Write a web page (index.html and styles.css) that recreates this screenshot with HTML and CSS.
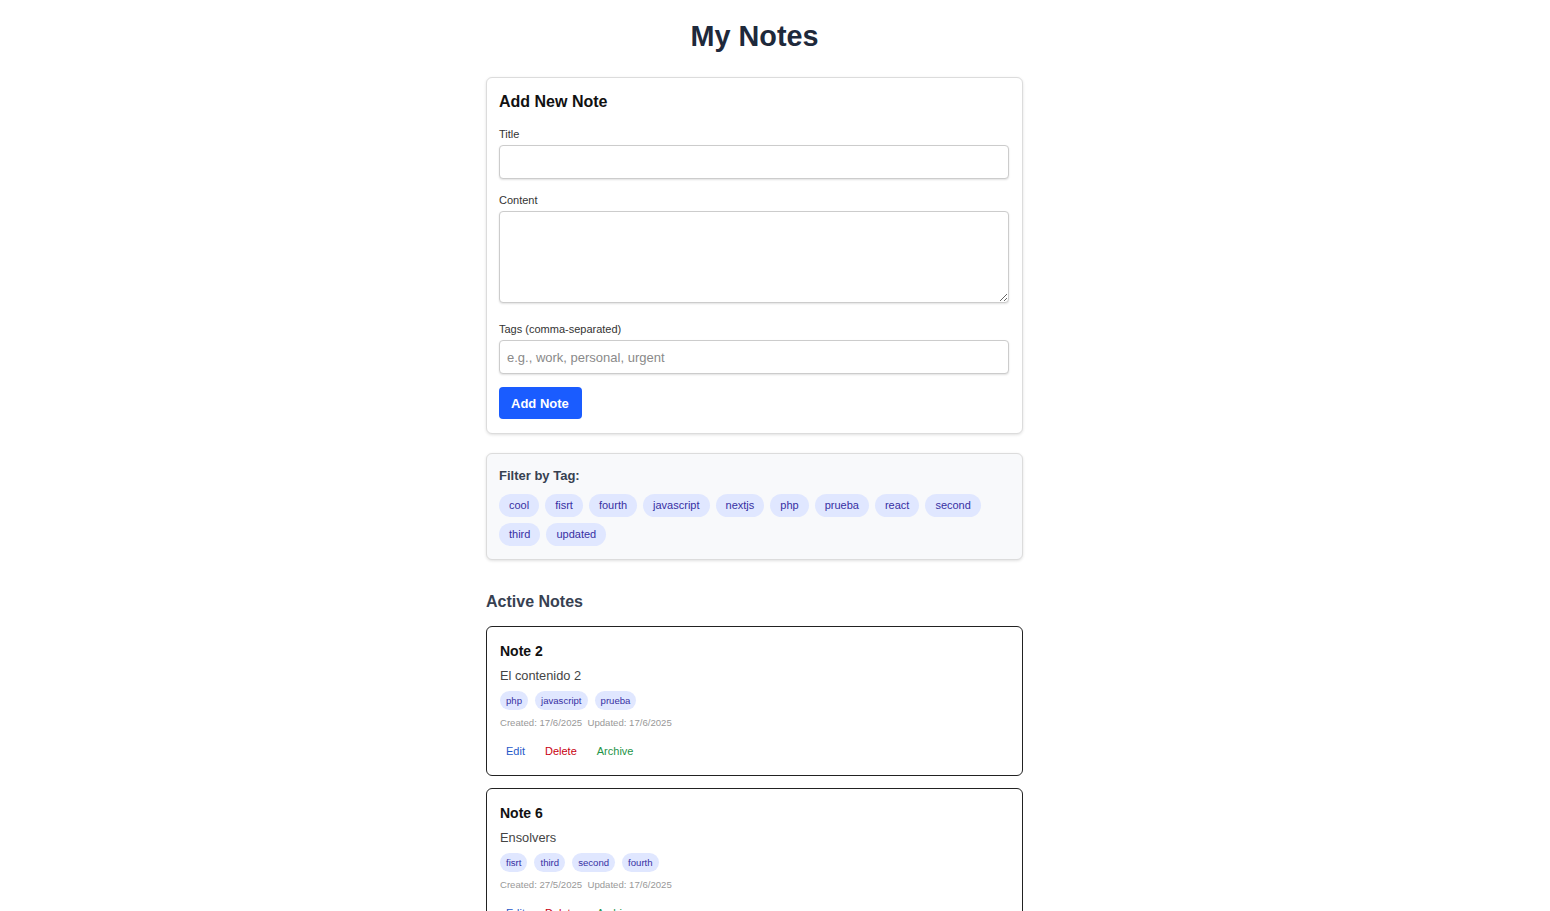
FILE: index.html
```html
<!DOCTYPE html>
<html lang="en">
<head>
<meta charset="utf-8">
<title>My Notes</title>
<link rel="stylesheet" href="styles.css">
</head>
<body>
<div class="app">
  <h1 class="page-title">My Notes</h1>

  <form class="card form-card">
    <h2 class="card-title">Add New Note</h2>
    <div class="field">
      <label class="label">Title</label>
      <input class="input" type="text">
    </div>
    <div class="field field-area">
      <label class="label">Content</label>
      <textarea class="input textarea"></textarea>
    </div>
    <div class="field field-last">
      <label class="label">Tags (comma-separated)</label>
      <input class="input" type="text" placeholder="e.g., work, personal, urgent">
    </div>
    <button type="button" class="btn-primary">Add Note</button>
  </form>

  <section class="card filter-card">
    <h3 class="filter-title">Filter by Tag:</h3>
    <div class="tag-list">
      <span class="tag">cool</span>
      <span class="tag">fisrt</span>
      <span class="tag">fourth</span>
      <span class="tag">javascript</span>
      <span class="tag">nextjs</span>
      <span class="tag">php</span>
      <span class="tag">prueba</span>
      <span class="tag">react</span>
      <span class="tag">second</span>
      <span class="tag">third</span>
      <span class="tag">updated</span>
    </div>
  </section>

  <h2 class="section-title">Active Notes</h2>

  <article class="note">
    <h3 class="note-title">Note 2</h3>
    <p class="note-content">El contenido 2</p>
    <div class="note-tags">
      <span class="chip">php</span>
      <span class="chip">javascript</span>
      <span class="chip">prueba</span>
    </div>
    <div class="meta">Created: 17/6/2025&nbsp;&nbsp;Updated: 17/6/2025</div>
    <div class="actions">
      <button class="act edit">Edit</button>
      <button class="act delete">Delete</button>
      <button class="act archive">Archive</button>
    </div>
  </article>

  <article class="note">
    <h3 class="note-title">Note 6</h3>
    <p class="note-content">Ensolvers</p>
    <div class="note-tags">
      <span class="chip">fisrt</span>
      <span class="chip">third</span>
      <span class="chip">second</span>
      <span class="chip">fourth</span>
    </div>
    <div class="meta">Created: 27/5/2025&nbsp;&nbsp;Updated: 17/6/2025</div>
    <div class="actions">
      <button class="act edit">Edit</button>
      <button class="act delete">Delete</button>
      <button class="act archive">Archive</button>
    </div>
  </article>
</div>
</body>
</html>
```

FILE: styles.css
```css
* { box-sizing: border-box; }

body {
  margin: 0;
  padding-right: 41px;
  background: #fff;
  font-family: "Liberation Sans", Arial, sans-serif;
  color: #222;
}

.app {
  width: 537px;
  margin: 0 auto;
  padding-bottom: 40px;
}

.page-title {
  margin: 0;
  padding: 19px 0 24px;
  text-align: center;
  font-size: 28.8px;
  line-height: 34px;
  font-weight: 700;
  color: #1e293b;
}

.card {
  border: 1px solid #dcdcdc;
  border-radius: 6px;
  box-shadow: 0 1px 3px rgba(0,0,0,0.12);
  background: #fff;
}

.form-card {
  padding: 13px 13px 14px 12px;
  margin-bottom: 19px;
}

.card-title {
  margin: 0 0 15px;
  font-size: 16px;
  line-height: 22px;
  font-weight: 700;
  color: #111;
}

.field { margin-bottom: 15px; }
.field-area { margin-bottom: 20px; }
.field-last { margin-bottom: 13px; }

.label {
  display: block;
  font-size: 11px;
  line-height: 13px;
  color: #333;
  margin-bottom: 4px;
}

.input {
  display: block;
  width: 100%;
  height: 34px;
  padding: 6px 7px;
  border: 1px solid #ccc;
  border-radius: 4px;
  box-shadow: 0 1px 2px rgba(0,0,0,0.12);
  font-family: "Liberation Sans", Arial, sans-serif;
  font-size: 13px;
  color: #222;
  background: #fff;
}
.input::placeholder { color: #8a8a8a; }

.textarea {
  height: 92px;
  resize: vertical;
}

.btn-primary {
  display: block;
  height: 32px;
  padding: 0 13px 0 12px;
  border: none;
  border-radius: 4px;
  background: #1a5cff;
  color: #fff;
  font-family: "Liberation Sans", Arial, sans-serif;
  font-size: 13px;
  font-weight: 700;
}

.filter-card {
  background: #f8f9fb;
  padding: 14px 12px 13px 12px;
  margin-bottom: 32px;
}

.filter-title {
  margin: 0 0 10px;
  font-size: 13px;
  line-height: 16px;
  font-weight: 700;
  color: #374151;
}

.tag-list {
  display: flex;
  flex-wrap: wrap;
  gap: 6px 6px;
}

.tag {
  display: inline-block;
  height: 23px;
  padding: 0 10px;
  line-height: 23px;
  border-radius: 12px;
  background: #e0e7ff;
  color: #3730a3;
  font-size: 11px;
}

.section-title {
  margin: 0 0 14px;
  font-size: 16px;
  line-height: 20px;
  font-weight: 700;
  color: #374151;
}

.note {
  border: 1px solid #222;
  border-radius: 6px;
  padding: 15px 13px 13px 13px;
  margin-bottom: 12px;
}

.note-title {
  margin: 0 0 7px;
  font-size: 14px;
  line-height: 19px;
  font-weight: 700;
  color: #111;
}

.note-content {
  margin: 0 0 8px;
  font-size: 12.8px;
  line-height: 15px;
  color: #444;
}

.note-tags {
  display: flex;
  flex-wrap: wrap;
  gap: 7px;
  margin-bottom: 7px;
}

.chip {
  display: inline-block;
  height: 19px;
  line-height: 19px;
  padding: 0 6px;
  border-radius: 10px;
  background: #e0e7ff;
  color: #3730a3;
  font-size: 9.6px;
}

.meta {
  font-size: 9.6px;
  line-height: 12px;
  color: #999;
  margin-bottom: 11px;
}

.actions {
  display: flex;
  gap: 8px;
}

.act {
  border: none;
  background: transparent;
  padding: 4px 6px;
  font-family: "Liberation Sans", Arial, sans-serif;
  font-size: 11px;
  line-height: 14px;
}
.edit { color: #2558c8; }
.delete { color: #c8000f; }
.archive { color: #1e9448; }
```
